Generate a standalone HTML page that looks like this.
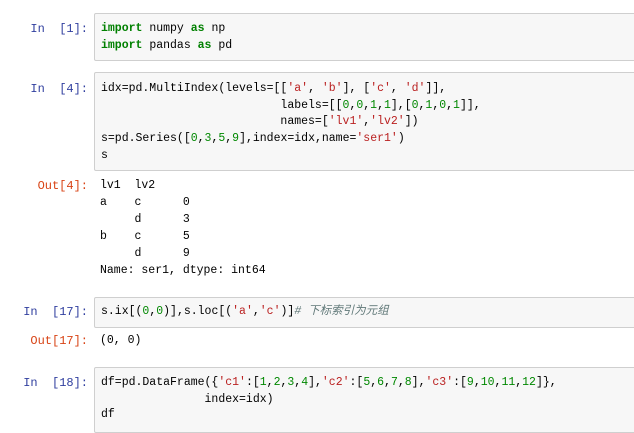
<!DOCTYPE html>
<html><head><meta charset="utf-8"><style>
body{margin:0;width:634px;height:432px;background:#fff;position:relative;overflow:hidden;font-family:"Liberation Mono","Noto Sans CJK SC",monospace;font-size:11.5px;color:#000}
.box{position:absolute;left:94px;width:560px;background:#f7f7f7;border:1px solid #cfcfcf;border-radius:2px}
.l{position:absolute;white-space:pre;line-height:16px}
.p{position:absolute;right:546px;white-space:pre;line-height:16px;font-size:12px}
.in{color:#303f9f}.out{color:#d84315}
.k{color:#008000;font-weight:bold}.s{color:#ba2121}.n{color:#080}.c{color:#607878;font-style:italic}
</style></head><body>
<div class="box" style="top:13px;height:46px"></div>
<div class="box" style="top:72px;height:97px"></div>
<div class="box" style="top:297px;height:29px"></div>
<div class="box" style="top:367px;height:64px"></div>

<div class="p in" style="top:21px">In  [1]:</div>
<div class="l" style="left:101px;top:21px"><span class="k">import</span> numpy <span class="k">as</span> np</div>
<div class="l" style="left:101px;top:38px"><span class="k">import</span> pandas <span class="k">as</span> pd</div>

<div class="p in" style="top:81px">In  [4]:</div>
<div class="l" style="left:101px;top:81px">idx=pd.MultiIndex(levels=[[<span class="s">'a'</span>, <span class="s">'b'</span>], [<span class="s">'c'</span>, <span class="s">'d'</span>]],</div>
<div class="l" style="left:101px;top:98px">                          labels=[[<span class="n">0</span>,<span class="n">0</span>,<span class="n">1</span>,<span class="n">1</span>],[<span class="n">0</span>,<span class="n">1</span>,<span class="n">0</span>,<span class="n">1</span>]],</div>
<div class="l" style="left:101px;top:114px">                          names=[<span class="s">'lv1'</span>,<span class="s">'lv2'</span>])</div>
<div class="l" style="left:101px;top:131px">s=pd.Series([<span class="n">0</span>,<span class="n">3</span>,<span class="n">5</span>,<span class="n">9</span>],index=idx,name=<span class="s">'ser1'</span>)</div>
<div class="l" style="left:101px;top:148px">s</div>

<div class="p out" style="top:178px">Out[4]:</div>
<div class="l" style="left:100px;top:178px">lv1  lv2</div>
<div class="l" style="left:100px;top:195px">a    c      0</div>
<div class="l" style="left:100px;top:212px">     d      3</div>
<div class="l" style="left:100px;top:229px">b    c      5</div>
<div class="l" style="left:100px;top:246px">     d      9</div>
<div class="l" style="left:100px;top:263px">Name: ser1, dtype: int64</div>

<div class="p in" style="top:304px">In  [17]:</div>
<div class="l" style="left:101px;top:304px">s.ix[(<span class="n">0</span>,<span class="n">0</span>)],s.loc[(<span class="s">'a'</span>,<span class="s">'c'</span>)]<span class="c"># 下标索引为元组</span></div>

<div class="p out" style="top:333px">Out[17]:</div>
<div class="l" style="left:100px;top:333px">(0, 0)</div>

<div class="p in" style="top:375px">In  [18]:</div>
<div class="l" style="left:101px;top:375px">df=pd.DataFrame({<span class="s">'c1'</span>:[<span class="n">1</span>,<span class="n">2</span>,<span class="n">3</span>,<span class="n">4</span>],<span class="s">'c2'</span>:[<span class="n">5</span>,<span class="n">6</span>,<span class="n">7</span>,<span class="n">8</span>],<span class="s">'c3'</span>:[<span class="n">9</span>,<span class="n">10</span>,<span class="n">11</span>,<span class="n">12</span>]},</div>
<div class="l" style="left:101px;top:392px">               index=idx)</div>
<div class="l" style="left:101px;top:407px">df</div>
</body></html>
